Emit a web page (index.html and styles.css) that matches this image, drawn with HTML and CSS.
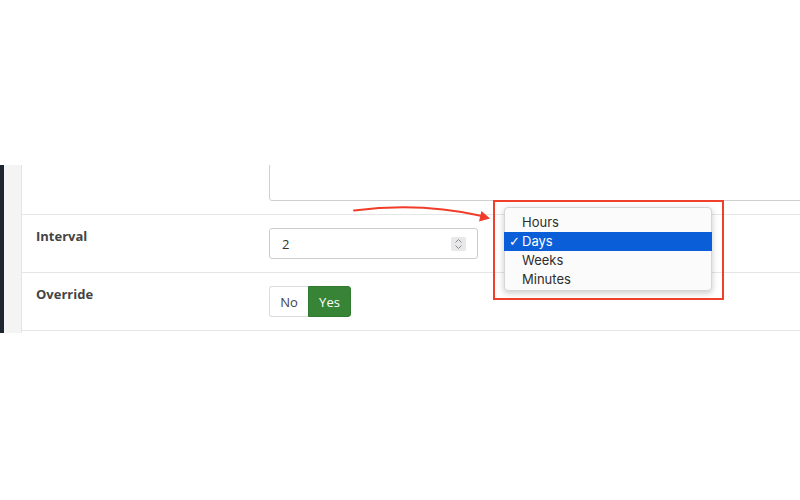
FILE: index.html
```html
<!DOCTYPE html>
<html>
<head>
<meta charset="utf-8">
<link rel="stylesheet" href="styles.css">
</head>
<body>
<div class="page">
  <div class="panel">
    <div class="sidebar"></div>
    <div class="gutter"></div>
    <div class="content">
      <div class="row row-text">
        <div class="label"></div>
        <div class="control"><div class="textarea"></div></div>
      </div>
      <div class="row">
        <div class="label">Interval</div>
        <div class="control">
          <div class="number">
            <span class="num-value">2</span>
            <span class="spinner">
              <svg width="9" height="12" viewBox="0 0 9 12"><path d="M1.5 4.5 L4.5 1.5 L7.5 4.5 M1.5 7.5 L4.5 10.5 L7.5 7.5" fill="none" stroke="#8a8a8a" stroke-width="1"/></svg>
            </span>
          </div>
        </div>
      </div>
      <div class="row">
        <div class="label">Override</div>
        <div class="control">
          <div class="toggle">
            <span class="opt opt-no">No</span>
            <span class="opt opt-yes">Yes</span>
          </div>
        </div>
      </div>
    </div>
  </div>

  <svg class="arrow" width="800" height="500" viewBox="0 0 800 500">
    <path d="M354 210.5 Q420 202 482 216" fill="none" stroke="#f03c28" stroke-width="1.9" stroke-linecap="round"/>
    <polygon points="490,218.5 479,221.5 481.5,211" fill="#f03c28"/>
  </svg>
  <div class="redbox"></div>
  <div class="menu">
    <div class="item">Hours</div>
    <div class="item selected"><span class="check">✓</span>Days</div>
    <div class="item">Weeks</div>
    <div class="item">Minutes</div>
  </div>
</div>
</body>
</html>
```
FILE: styles.css
```css
html, body {
  margin: 0;
  padding: 0;
  background: #ffffff;
}
.page {
  position: relative;
  width: 800px;
  height: 500px;
  overflow: hidden;
  font-family: "Open Sans", "Liberation Sans", sans-serif;
  padding-top: 165px;
  box-sizing: border-box;
}
.panel {
  display: flex;
  height: 168px;
}
.sidebar {
  flex: 0 0 4px;
  background: #1f262f;
}
.gutter {
  flex: 0 0 17px;
  background: #f4f4f4;
  border-right: 1px solid #e4e4e4;
}
.content {
  flex: 1;
  min-width: 0;
  overflow: hidden;
  display: flex;
  flex-direction: column;
}
.row {
  display: flex;
  padding: 13px 0 13px;
  border-bottom: 1px solid #e6e6e6;
}
.row-text {
  height: 50px;
  box-sizing: border-box;
  padding: 0;
  overflow: hidden;
}
.label {
  flex: 0 0 233px;
  padding-left: 14px;
  font-size: 13px;
  font-weight: 700;
  color: #444;
  line-height: 17px;
}
.control {
  flex: 1;
  min-width: 0;
  display: flex;
}
.textarea {
  flex: 0 0 600px;
  height: 61px;
  margin-top: -25px;
  border: 1px solid #cfcfcf;
  border-radius: 3px;
  box-sizing: border-box;
}
.number {
  width: 209px;
  height: 31px;
  box-sizing: border-box;
  border: 1px solid #cdcdcd;
  border-radius: 3px;
  display: flex;
  align-items: center;
  justify-content: space-between;
  padding: 0 11px 0 12px;
  font-size: 13px;
  color: #333;
}
.spinner {
  width: 15px;
  height: 14px;
  background: #e8e8ea;
  border-radius: 2px;
  display: flex;
  align-items: center;
  justify-content: center;
}
.toggle {
  display: flex;
  height: 31px;
}
.opt {
  display: flex;
  align-items: center;
  justify-content: center;
  font-size: 13px;
  box-sizing: border-box;
}
.opt-no {
  width: 39px;
  border: 1px solid #dcdcdc;
  border-right: none;
  border-radius: 3px 0 0 3px;
  color: #444;
  background: #fff;
}
.opt-yes {
  width: 43px;
  background: #378436;
  border: 1px solid #2f7a2f;
  border-radius: 0 3px 3px 0;
  color: #fff;
}
.arrow {
  position: absolute;
  left: 0;
  top: 0;
  pointer-events: none;
}
.redbox {
  position: absolute;
  left: 493px;
  top: 200px;
  width: 231px;
  height: 100px;
  box-sizing: border-box;
  border: 2px solid #f0402c;
}
.menu {
  position: absolute;
  left: 504px;
  top: 207px;
  width: 208px;
  height: 84px;
  box-sizing: border-box;
  padding-top: 5px;
  background: #fbfbfb;
  border: 1px solid #d6d6d6;
  border-radius: 4px;
  box-shadow: 0 2px 6px rgba(0,0,0,0.22);
  font-family: "Inter", "Liberation Sans", sans-serif;
  font-size: 13px;
  color: #2e2e2e;
}
.item {
  height: 19px;
  line-height: 19px;
  padding-left: 17px;
  position: relative;
}
.item.selected {
  background: #0a5ed8;
  color: #fff;
  margin: 0 -1px;
  padding-left: 18px;
}
.check {
  position: absolute;
  left: 5px;
  top: 0;
  font-family: "DejaVu Sans", sans-serif;
  font-size: 13px;
  font-weight: 700;
}
```
